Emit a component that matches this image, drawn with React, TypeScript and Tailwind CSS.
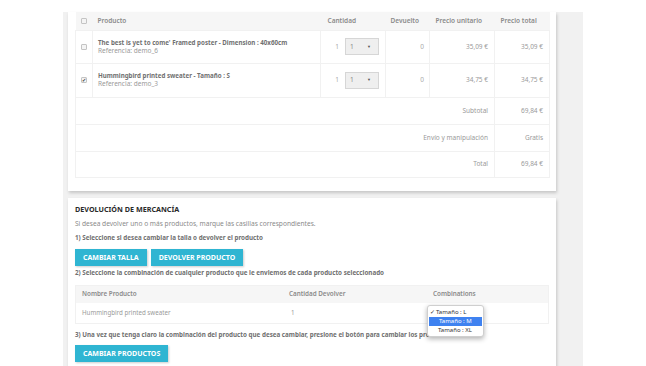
const items = [
  {
    name: "The best is yet to come' Framed poster - Dimension : 40x60cm",
    ref: "Referencia: demo_6",
    checked: false,
    unit: "35,09 €",
    total: "35,09 €",
    h: "h-[33px]",
  },
  {
    name: "Hummingbird printed sweater - Tamaño : S",
    ref: "Referencia: demo_3",
    checked: true,
    unit: "34,75 €",
    total: "34,75 €",
    h: "h-[34px]",
  },
];

const totals = [
  { label: "Subtotal", value: "69,84 €", h: "h-[27px]" },
  { label: "Envío y manipulación", value: "Gratis", h: "h-[27px]" },
  { label: "Total", value: "69,84 €", h: "h-[26px]" },
];

function Check({ checked }: { checked?: boolean }) {
  return (
    <span className="mx-auto flex h-[6px] w-[6px] items-center justify-center rounded-[1px] border border-[#c4c4c4] bg-[#f4f4f4] text-[5px] leading-none text-[#444]">
      {checked ? "✔" : ""}
    </span>
  );
}

function Button({ children }: { children: React.ReactNode }) {
  return (
    <button className="h-[17px] bg-[#2fb5d2] px-[8px] text-[7px] font-bold uppercase leading-[17px] text-white shadow-[1px_1px_2px_rgba(0,0,0,0.2)]">
      {children}
    </button>
  );
}

export default function App() {
  const cell = "border border-[#f1f1f1]";
  return (
    <div className="relative h-[366px] w-[646px] overflow-hidden bg-white pl-[63px] pt-[12px] font-['Noto_Sans',sans-serif] text-[#7a7a7a] antialiased">
      <div className="h-full w-[520px] bg-[#f1f1f1] pl-[5px]">
        {/* detalle del pedido */}
        <div className="w-[488px] bg-white px-[7px] pb-[13px] shadow-[1px_2px_3px_rgba(0,0,0,0.18)]">
          <table className="w-[474px] table-fixed border-collapse text-[6.5px]">
            <colgroup>
              <col className="w-[17px]" />
              <col className="w-[228px]" />
              <col className="w-[65px]" />
              <col className="w-[44px]" />
              <col className="w-[65px]" />
              <col className="w-[55px]" />
            </colgroup>
            <thead>
              <tr className="h-[18px] bg-[#f6f6f6] text-left font-semibold text-[#8a8a8a]">
                <th className="border-0">
                  <Check />
                </th>
                <th className="pl-[5px] font-semibold">Producto</th>
                <th className="pl-[7px] font-semibold">Cantidad</th>
                <th className="pl-[5px] font-semibold">Devuelto</th>
                <th className="pl-[6px] font-semibold">Precio unitario</th>
                <th className="pl-[6px] font-semibold">Precio total</th>
              </tr>
            </thead>
            <tbody>
              {items.map((it) => (
                <tr key={it.ref} className={it.h}>
                  <td className={cell}>
                    <Check checked={it.checked} />
                  </td>
                  <td className={`${cell} pl-[5px] leading-[8px]`}>
                    <div className="text-[6.2px] font-bold text-[#707070]">{it.name}</div>
                    <div className="text-[#9a9a9a]">{it.ref}</div>
                  </td>
                  <td className={`${cell} pr-[6px]`}>
                    <div className="flex items-center justify-end gap-[6px] text-[#aaa]">
                      <span>1</span>
                      <span className="flex h-[17px] w-[34px] items-center justify-between border border-[#d6d6d6] bg-[#efefef] pl-[4px] pr-[7px] text-[#888]">
                        <span>1</span>
                        <span className="text-[4px] text-[#555]">▼</span>
                      </span>
                    </div>
                  </td>
                  <td className={`${cell} pr-[5px] text-right text-[#aaa]`}>0</td>
                  <td className={`${cell} pr-[6px] text-right text-[#9a9a9a]`}>{it.unit}</td>
                  <td className={`${cell} pr-[6px] text-right text-[#9a9a9a]`}>{it.total}</td>
                </tr>
              ))}
              {totals.map((t) => (
                <tr key={t.label} className={t.h}>
                  <td colSpan={5} className={`${cell} pr-[6px] text-right text-[#9a9a9a]`}>
                    {t.label}
                  </td>
                  <td className={`${cell} pr-[6px] text-right text-[#9a9a9a]`}>{t.value}</td>
                </tr>
              ))}
            </tbody>
          </table>
        </div>

        {/* devolución */}
        <div className="mt-[7px] h-[200px] w-[488px] bg-white px-[7px] pt-[6px] shadow-[1px_2px_3px_rgba(0,0,0,0.18)]">
          <h2 className="text-[7.2px] font-bold uppercase leading-[10px] text-[#2a2a2a]">
            Devolución de mercancía
          </h2>
          <p className="mt-[5px] text-[6.6px] leading-[10px] text-[#8a8a8a]">
            Si desea devolver uno o más productos, marque las casillas correspondientes.
          </p>
          <p className="mt-[4px] text-[6.25px] font-bold leading-[10px] text-[#6f6f6f]">
            1) Seleccione si desea cambiar la talla o devolver el producto
          </p>
          <div className="mt-[6px] flex gap-[4px]">
            <Button>Cambiar talla</Button>
            <Button>Devolver producto</Button>
          </div>
          <p className="mt-[2px] text-[6.25px] font-bold leading-[10px] text-[#6f6f6f]">
            2) Seleccione la combinación de cualquier producto que le enviemos de cada producto seleccionado
          </p>
          <div className="mt-[7px] w-[474px] border border-[#f1f1f1]">
            <div className="grid h-[17px] grid-cols-[207px_144px_1fr] items-center bg-[#f6f6f6] text-[6.3px] font-semibold text-[#8a8a8a]">
              <span className="pl-[6px]">Nombre Producto</span>
              <span className="pl-[6px]">Cantidad Devolver</span>
              <span className="pl-[6px]">Combinations</span>
            </div>
            <div className="grid h-[20px] grid-cols-[207px_144px_1fr] items-center text-[6.2px] text-[#9a9a9a]">
              <span className="pl-[6px]">Hummingbird printed sweater</span>
              <span className="pl-[8px]">1</span>
              <span className="relative h-full">
                <div className="absolute left-0 top-[2px] z-10 w-[57px] rounded-[3px] border border-[#cfcfcf] bg-white pb-[1px] pt-[2px] text-[6px] leading-[9px] text-[#333] shadow-[0_2px_5px_rgba(0,0,0,0.3)]">
                  <div className="flex h-[9px] items-center px-[2px]">
                    <span className="w-[6px]">✓</span>
                    <span>Tamaño : L</span>
                  </div>
                  <div className="mx-[1px] flex h-[9px] items-center bg-[#3f82f0] px-[1px] text-white">
                    <span className="w-[9px]" />
                    <span>Tamaño : M</span>
                  </div>
                  <div className="flex h-[9px] items-center px-[2px]">
                    <span className="w-[8px]" />
                    <span>Tamaño : XL</span>
                  </div>
                </div>
              </span>
            </div>
          </div>
          <p className="mt-[6px] text-[6.25px] font-bold leading-[10px] text-[#6f6f6f]">
            3) Una vez que tenga claro la combinación del producto que desea cambiar, presione el botón para cambiar los productos.
          </p>
          <div className="mt-[5px] flex">
            <Button>Cambiar productos</Button>
          </div>
        </div>
      </div>
    </div>
  );
}
